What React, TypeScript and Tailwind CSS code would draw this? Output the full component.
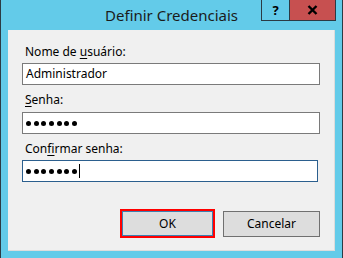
const Dots = () => (
  <div className="flex items-center gap-[2.7px] pl-[3px]">
    {[0, 1, 2, 3, 4, 5, 6].map((i) => (
      <span key={i} className="block h-[5px] w-[5px] rounded-full bg-black" />
    ))}
  </div>
);

const App = () => {
  return (
    <div
      className="relative h-[258px] w-[343px] overflow-hidden border-x border-[#2c3b44] bg-[#63cbe9] text-black"
      style={{ fontFamily: '"Noto Sans", "Open Sans", sans-serif' }}
    >
      {/* title bar */}
      <div className="relative flex h-[30px] items-center justify-center">
        <span className="mt-[-1px] text-[15px] leading-5 text-[#1b1b1b]">
          Definir Credenciais
        </span>
        <div className="absolute right-[6px] top-0 flex h-[21px] border border-t-0 border-[#2b3a44]">
          <div className="flex w-[28px] items-center justify-center border-r border-[#2b3a44] text-[13px] font-bold leading-none">
            ?
          </div>
          <div className="flex w-[45px] items-center justify-center bg-[#c75050]">
            <svg width="11" height="10" viewBox="0 0 11 10">
              <path d="M1.5 1 L9.5 9 M9.5 1 L1.5 9" stroke="#000" strokeWidth="2.4" />
            </svg>
          </div>
        </div>
      </div>

      {/* body */}
      <div className="ml-[7px] h-[221px] w-[327px] border-b border-r border-[#dcdcdc] bg-[#f0f0f0] px-[14px] pt-[14px] text-[12px] leading-4">
        <div className="mb-[3px] pl-[3px]">
          Nome de <span className="underline underline-offset-2">u</span>suário:
        </div>
        <div className="flex h-[22px] w-[298px] items-center border border-[#7a7a7a] bg-white pl-[3px]">
          Administrador
        </div>

        <div className="mb-[4px] mt-[7px] pl-[3px]">
          <span className="underline underline-offset-2">S</span>enha:
        </div>
        <div className="flex h-[22px] w-[298px] items-center border border-[#7a7a7a] bg-white">
          <Dots />
        </div>

        <div className="mb-[3px] mt-[7px] pl-[3px]">
          Con<span className="underline underline-offset-2">f</span>irmar senha:
        </div>
        <div className="flex h-[22px] w-[296px] items-center border border-[#2b5f8e] bg-white">
          <Dots />
          <span className="ml-[2px] block h-[14px] w-px bg-black" />
        </div>

        <div className="mt-[27px] flex items-center">
          <div className="ml-[98px] flex h-[29px] w-[95px] items-center justify-center border-2 border-[#ff0000]">
            <div className="flex h-full w-full items-center justify-center border border-[#3c7fb1] bg-[#dddddd]">
              OK
            </div>
          </div>
          <div className="ml-[8px] flex h-[26px] w-[97px] items-center justify-center border border-[#707070] bg-[#dddddd]">
            Cancelar
          </div>
        </div>
      </div>
    </div>
  );
};

export default App;
